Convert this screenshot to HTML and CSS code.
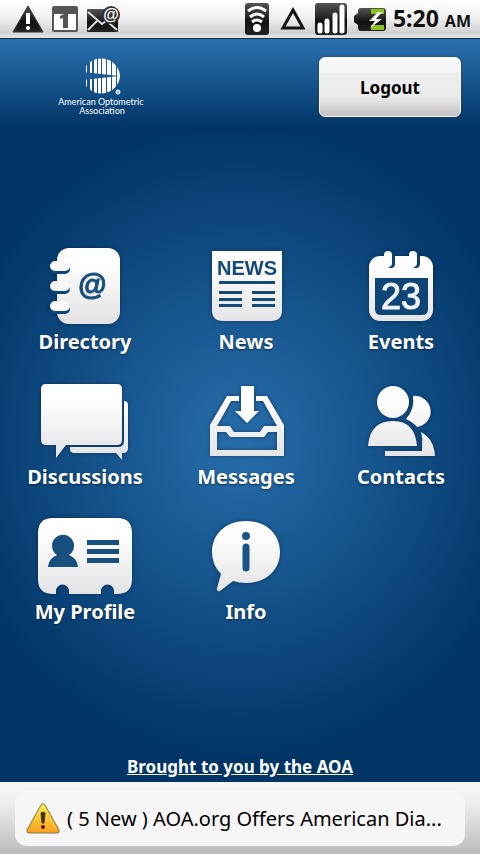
FILE: index.html
```html
<!DOCTYPE html>
<html lang="en">
<head>
  <meta charset="UTF-8" />
  <meta name="viewport" content="width=device-width, initial-scale=1.0" />
  <title>American Optometric Association</title>
  <link rel="stylesheet" href="styles.css">
</head>
<body>
  <svg class="defs" width="0" height="0" aria-hidden="true">
    <defs>
      <linearGradient id="paper" gradientUnits="userSpaceOnUse" x1="0" y1="0" x2="0" y2="80">
        <stop offset="0.2" stop-color="#ffffff" />
        <stop offset="1" stop-color="#e2e2e4" />
      </linearGradient>
      <linearGradient id="dark" x1="0" y1="0" x2="0" y2="1">
        <stop offset="0" stop-color="#555555" />
        <stop offset="0.6" stop-color="#111111" />
        <stop offset="1" stop-color="#222222" />
      </linearGradient>
      <linearGradient id="yellow" x1="0" y1="0" x2="0" y2="1">
        <stop offset="0" stop-color="#ffee55" />
        <stop offset="1" stop-color="#f9a01b" />
      </linearGradient>
    </defs>
  </svg>

  <div class="status-bar">
    <div class="status-left">
      <svg width="32" height="28" viewBox="0 0 32 28">
        <path d="M16 1 L31 27 H1 Z" fill="url(#dark)" stroke="#333" stroke-linejoin="round" />
        <path d="M14 8 h4 v11 h-4 Z" fill="#fff" />
        <circle cx="16" cy="23" r="2" fill="#fff" />
      </svg>
      <svg width="28" height="28" viewBox="0 0 28 28">
        <rect x="1" y="1" width="26" height="26" rx="2" fill="#555" />
        <rect x="3" y="9" width="22" height="16" fill="#fff" />
        <path d="M9 11 L13 9 H17 V23 H12 V13 L9 14 Z" fill="#555" />
      </svg>
      <svg width="34" height="28" viewBox="0 0 34 28">
        <rect x="1" y="4" width="31" height="23" rx="1" fill="url(#dark)" />
        <path d="M2 7 L16 19 L20 16 M2 25 L11 16 M23 18 L31 25" fill="none" stroke="#ddd" stroke-width="2" />
        <circle cx="25" cy="10" r="9" fill="#333" />
        <text x="25" y="15" text-anchor="middle" class="mail-at">@</text>
      </svg>
    </div>
    <div class="status-right">
      <svg width="24" height="32" viewBox="0 0 24 32">
        <rect width="24" height="32" rx="3" fill="url(#dark)" />
        <path d="M3 8 Q12 1 21 8 M5 14 Q12 8 19 14 M7 19 Q12 15 17 19" fill="none" stroke="#fff" stroke-width="3" />
        <circle cx="12" cy="25" r="4" fill="#fff" />
      </svg>
      <svg width="32" height="32" viewBox="0 0 32 32">
        <path d="M17 7 L27 25 H7 Z" fill="none" stroke="#111" stroke-width="3" />
      </svg>
      <svg width="32" height="32" viewBox="0 0 32 32">
        <rect width="32" height="32" rx="3" fill="url(#dark)" />
        <path d="M5 22 V28 M12 18 V28 M20 12 V28 M27 4 V28" stroke="#fff" stroke-width="5" stroke-linecap="round" />
      </svg>
      <svg width="32" height="32" viewBox="0 0 32 32">
        <path d="M7 5 H29 Q32 5 32 8 V25 Q32 28 29 28 H7 Q4 28 4 25 V22 L0 19 V13 L4 10 V8 Q4 5 7 5 Z" fill="url(#dark)" />
        <path d="M17 6 H30 V11 H17 Z M17 22 H30 V27 H17 Z" fill="#8cc220" />
        <path d="M24 9 L15 18 H21 L16 25 L28 16 H22 L28 9 Z" fill="#fff" />
      </svg>
      <span class="clock">5:20 <small>AM</small></span>
    </div>
  </div>

  <header class="header">
    <svg class="logo" width="90" height="60" viewBox="0 0 90 60" role="img" aria-label="American Optometric Association">
      <clipPath id="ball">
        <path d="M63 18 A19 19 0 0 0 26 15 L62 19 L26 23 A19 19 0 0 0 63 20 Z" />
      </clipPath>
      <g clip-path="url(#ball)" fill="#fff">
        <rect x="29" y="0" width="1" height="40" />
        <rect x="33" y="0" width="2" height="40" />
        <rect x="37" y="0" width="3" height="40" />
        <rect x="41" y="0" width="3" height="40" />
        <rect x="45" y="0" width="4" height="40" />
        <rect x="50" y="0" width="4" height="40" />
        <rect x="55" y="0" width="4" height="40" />
        <rect x="60" y="0" width="5" height="40" />
      </g>
      <circle cx="61" cy="35" r="2" fill="#8fb4d6" stroke="#fff" />
      <text text-anchor="middle">
        <tspan x="45" y="48">American Optometric</tspan>
        <tspan x="45" y="57">Association</tspan>
      </text>
    </svg>
    <button type="button" class="logout">Logout</button>
  </header>

  <main class="main">
    <nav class="menu">
      <a href="#directory">
        <svg viewBox="0 0 96 80">
          <rect x="20" y="2" width="63" height="76" rx="12" fill="url(#paper)" />
          <g fill="none" stroke-linecap="round" stroke-width="10">
            <path d="M18 23 H28 M18 43 H28 M18 63 H28" stroke="#0c4679" />
            <path d="M18 20 H28 M18 40 H28 M18 60 H28" stroke="#f8f8f8" />
          </g>
          <text x="55" y="49" text-anchor="middle" class="at">@</text>
        </svg>
        <span>Directory</span>
      </a>
      <a href="#news">
        <svg viewBox="0 0 96 80">
          <path d="M14 5 H84 V64 Q84 75 73 75 H25 Q14 75 14 64 Z" fill="url(#paper)" />
          <text x="49" y="29" text-anchor="middle" class="news">NEWS</text>
          <path d="M21 35 H77 V38 H21 Z M21 45 H44 V48 H21 Z M54 45 H77 V48 H54 Z M21 52 H44 V55 H21 Z M54 52 H77 V55 H54 Z M21 58 H44 V61 H21 Z M54 58 H77 V61 H54 Z" fill="#14497a" />
        </svg>
        <span>News</span>
      </a>
      <a href="#events">
        <svg viewBox="0 0 96 80">
          <rect x="16" y="10" width="64" height="65" rx="11" fill="url(#paper)" />
          <path d="M38 10 V18 M63 10 V18" stroke="#0c4173" stroke-width="8" stroke-linecap="round" />
          <path d="M35 9 V17 M60 9 V17" stroke="#fff" stroke-width="8" stroke-linecap="round" />
          <path d="M22 32 H75 V63 Q75 69 69 69 H28 Q22 69 22 63 Z" fill="#0e4577" />
          <text x="48" y="63" text-anchor="middle" class="day">23</text>
        </svg>
        <span>Events</span>
      </a>
      <a href="#discussions">
        <svg viewBox="0 0 96 80">
          <path d="M87 20 Q91 20 91 24 V67 Q91 72 86 72 H85 V79 L79 72 H37 Q33 72 33 68 V66 H81 Q87 66 87 60 Z" fill="url(#paper)" />
          <path d="M9 3 H80 Q85 3 85 8 V59 Q85 64 80 64 H29 L19 77 V64 H9 Q4 64 4 59 V8 Q4 3 9 3 Z" fill="url(#paper)" />
        </svg>
        <span>Discussions</span>
      </a>
      <a href="#messages">
        <svg viewBox="0 0 96 80">
          <path fill-rule="evenodd" d="M29 15 H41 V20 H33 L19 45 H32 L36 51 H62 L66 45 H79 L65 20 H58 V15 H69 L86 44 V75 H12 V44 Z M19 51 V69 H79 V51 H70 L66 56 H32 L28 51 Z" fill="url(#paper)" />
          <path d="M43 5 H56 V30 H61 L49 42 L37 30 H43 Z" fill="#fff" />
        </svg>
        <span>Messages</span>
      </a>
      <a href="#contacts">
        <svg viewBox="0 0 96 80">
          <path d="M60 15 A15 15 0 0 1 64 46 Q61 42 53 38 Q62 28 60 15 Z" fill="url(#paper)" />
          <path d="M68 51 Q81 58 82 75 H32 V70 H69 V65 Q70 58 68 51 Z" fill="url(#paper)" />
          <circle cx="40" cy="21" r="16" fill="url(#paper)" />
          <path d="M15 65 Q17 40 40 40 Q62 40 64 65 Z" fill="url(#paper)" />
        </svg>
        <span>Contacts</span>
      </a>
      <a href="#profile">
        <svg viewBox="0 0 96 80">
          <path d="M16 2 H80 Q95 2 95 17 V63 Q95 78 80 78 H77 V75 A6 6 0 0 0 64 75 V78 H32 V75 A6 6 0 0 0 19 75 V78 H16 Q1 78 1 63 V17 Q1 2 16 2 Z" fill="url(#paper)" />
          <path d="M11 51 Q12 42 20 39 A11 11 0 1 1 32 39 Q40 42 41 51 Z" fill="#17507f" />
          <path d="M50 24 H82 V29 H50 Z M50 33 H82 V38 H50 Z M50 42 H82 V47 H50 Z" fill="#17507f" />
        </svg>
        <span>My Profile</span>
      </a>
      <a href="#info">
        <svg viewBox="0 0 96 80">
          <path d="M48 5 C68 5 82 18 82 36 C82 54 68 67 48 67 Q41 67 35 65 L22 75 Q18 76 19 72 L23 58 Q14 49 14 36 C14 18 28 5 48 5 Z" fill="url(#paper)" />
          <circle cx="48" cy="20" r="4" fill="#1a5487" />
          <path d="M48 31 V52" stroke="#1a5487" stroke-width="7" stroke-linecap="round" />
        </svg>
        <span>Info</span>
      </a>
    </nav>
    <a class="sponsor" href="#aoa">Brought to you by the AOA</a>
  </main>

  <footer class="footer">
    <a class="alert" href="#alerts">
      <svg width="36" height="32" viewBox="0 0 36 32">
        <path d="M16 3 Q18 0 20 3 L34 28 Q35 31 32 31 H4 Q1 31 2 28 Z" fill="url(#yellow)" stroke="#8a7340" />
        <path d="M16 11 Q18 9 20 11 L19 21 H17 Z" fill="#443311" stroke="#443311" />
        <circle cx="18" cy="25" r="2" fill="#661100" />
      </svg>
      <span>( 5 New ) AOA.org Offers American Dia...</span>
    </a>
  </footer>
</body>
</html>
```

FILE: styles.css
```css
* {
  box-sizing: border-box;
}

body {
  margin: 0;
  min-height: 100vh;
  display: flex;
  flex-direction: column;
  font-family: "Noto Sans", "Open Sans", sans-serif;
  background: radial-gradient(ellipse 300px 320px at 50% 440px, #286eac, #003566);
}

a {
  color: #ffffff;
  text-decoration: none;
}

.defs {
  position: absolute;
}

.status-bar {
  height: 39px;
  padding: 0 9px 0 12px;
  display: flex;
  justify-content: space-between;
  align-items: center;
  background: linear-gradient(#ffffff, #f4f4f4 40%, #d2d2d2 85%, #e4e4e4);
  border-bottom: 1px solid #12304a;
}

.status-left,
.status-right {
  display: flex;
  align-items: center;
  gap: 7px;
}

.mail-at {
  font: bold 16px "Liberation Sans", sans-serif;
  fill: #ffffff;
}

.clock {
  font-size: 23px;
  font-weight: bold;
  line-height: 38px;
  color: #111111;
}

.clock small {
  font-size: 16px;
}

.header {
  height: 99px;
  padding: 18px 19px 0 57px;
  display: flex;
  justify-content: space-between;
  align-items: flex-start;
  background: linear-gradient(#2a70ae, #003566 90%, transparent);
}

.logo text {
  font-family: Lato, sans-serif;
  font-size: 9px;
  fill: #ffffff;
}

.logout {
  width: 142px;
  height: 60px;
  border: 1px solid #f4f4f4;
  border-radius: 6px;
  background: linear-gradient(#fafafa, #f4f4f4 25%, #eeeeee 27%, #ececec 65%, #c6c2c4);
  box-shadow: 0 0 2px #333333;
  font-family: inherit;
  font-size: 17px;
  font-weight: bold;
  color: #000000;
  cursor: pointer;
}

.main {
  flex: 1;
  display: flex;
  flex-direction: column;
  padding-top: 108px;
}

.menu {
  display: grid;
  grid-template-columns: 170fr 152fr 158fr;
  row-gap: 23px;
}

.menu a {
  display: flex;
  flex-direction: column;
  align-items: center;
  font-size: 20px;
  font-weight: bold;
  line-height: 32px;
  text-shadow: 0 1px 2px rgba(0, 0, 0, 0.5);
}

.menu svg {
  width: 96px;
  height: 80px;
  filter: drop-shadow(0 0 2px rgba(0, 20, 50, 0.5));
}

.menu .at {
  font: italic bold 29px "Liberation Sans", sans-serif;
  fill: #17507f;
  stroke: #17507f;
}

.menu .news {
  font: bold 20px "Liberation Sans", sans-serif;
  fill: #14497a;
}

.menu .day {
  font: 36px "Liberation Sans", sans-serif;
  fill: #f2f4f8;
  stroke: #f2f4f8;
}

.menu text {
  text-shadow: none;
}

.sponsor {
  margin: auto auto 0;
  font-size: 17px;
  font-weight: bold;
  line-height: 31px;
  text-decoration: underline;
}

.footer {
  padding: 8px 15px;
  background: linear-gradient(#f6f6f6, #efeeef 30%, #bdbbbd);
}

.alert {
  height: 56px;
  padding: 0 10px;
  display: flex;
  align-items: center;
  gap: 6px;
  border-radius: 12px;
  background: #f6f6f6;
  color: #000000;
  font-size: 20px;
}

.alert svg {
  flex: none;
}

.alert span {
  white-space: nowrap;
  overflow: hidden;
}
```
